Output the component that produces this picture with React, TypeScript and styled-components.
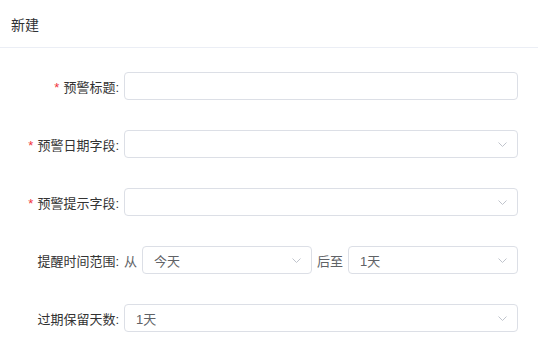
import React from 'react';
import styled, { createGlobalStyle } from 'styled-components';

const GlobalStyle = createGlobalStyle`
  body {
    margin: 0;
    background: #fff;
    font-family: "Helvetica Neue", "Liberation Sans", "Noto Sans CJK SC", sans-serif;
  }
`;

const Page = styled.div`
  width: 538px;
  height: 350px;
  overflow: hidden;
`;

const Header = styled.div`
  height: 48px;
  box-sizing: border-box;
  border-bottom: 1px solid #ebeef5;
  padding-left: 11px;
  display: flex;
  align-items: center;
  font-size: 14px;
  color: #303133;
`;

const Form = styled.div`
  padding: 24px 20px 0 0;
  display: flex;
  flex-direction: column;
  gap: 30px;
`;

const Row = styled.div`
  display: flex;
  align-items: center;
  height: 28px;
`;

const Label = styled.label`
  width: 124px;
  box-sizing: border-box;
  padding-right: 5px;
  text-align: right;
  font-size: 13px;
  color: #333333;
  flex-shrink: 0;
`;

const Star = styled.span`
  color: #f0343a;
  margin-right: 4px;
`;

const Field = styled.div<{ $width?: number }>`
  ${(p) => (p.$width ? `width: ${p.$width}px;` : 'flex: 1;')}
  height: 28px;
  box-sizing: border-box;
  border: 1px solid #dcdfe6;
  border-radius: 4px;
  display: flex;
  align-items: center;
  padding: 0 10px 0 11px;
  font-size: 13px;
  color: #606266;
  flex-shrink: 0;
`;

const Value = styled.span`
  flex: 1;
`;

const Word = styled.span`
  font-size: 13px;
  color: #606266;
  margin: 0 5px 0 0;
`;

const Mid = styled(Word)`
  margin: 0 5px;
`;

const Arrow = () => (
  <svg width="9" height="9" viewBox="0 0 9 9">
    <path d="M0.5 2.5 L4.5 6.5 L8.5 2.5" fill="none" stroke="#c0c4cc" strokeWidth="1" />
  </svg>
);

function Select({ value, width }: { value?: string; width?: number }) {
  return (
    <Field $width={width}>
      <Value>{value}</Value>
      <Arrow />
    </Field>
  );
}

export default function App() {
  return (
    <Page>
      <GlobalStyle />
      <Header>新建</Header>
      <Form>
        <Row>
          <Label><Star>*</Star>预警标题:</Label>
          <Field />
        </Row>
        <Row>
          <Label><Star>*</Star>预警日期字段:</Label>
          <Select />
        </Row>
        <Row>
          <Label><Star>*</Star>预警提示字段:</Label>
          <Select />
        </Row>
        <Row>
          <Label>提醒时间范围:</Label>
          <Word>从</Word>
          <Select value="今天" width={170} />
          <Mid>后至</Mid>
          <Select value="1天" />
        </Row>
        <Row>
          <Label>过期保留天数:</Label>
          <Select value="1天" />
        </Row>
      </Form>
    </Page>
  );
}
